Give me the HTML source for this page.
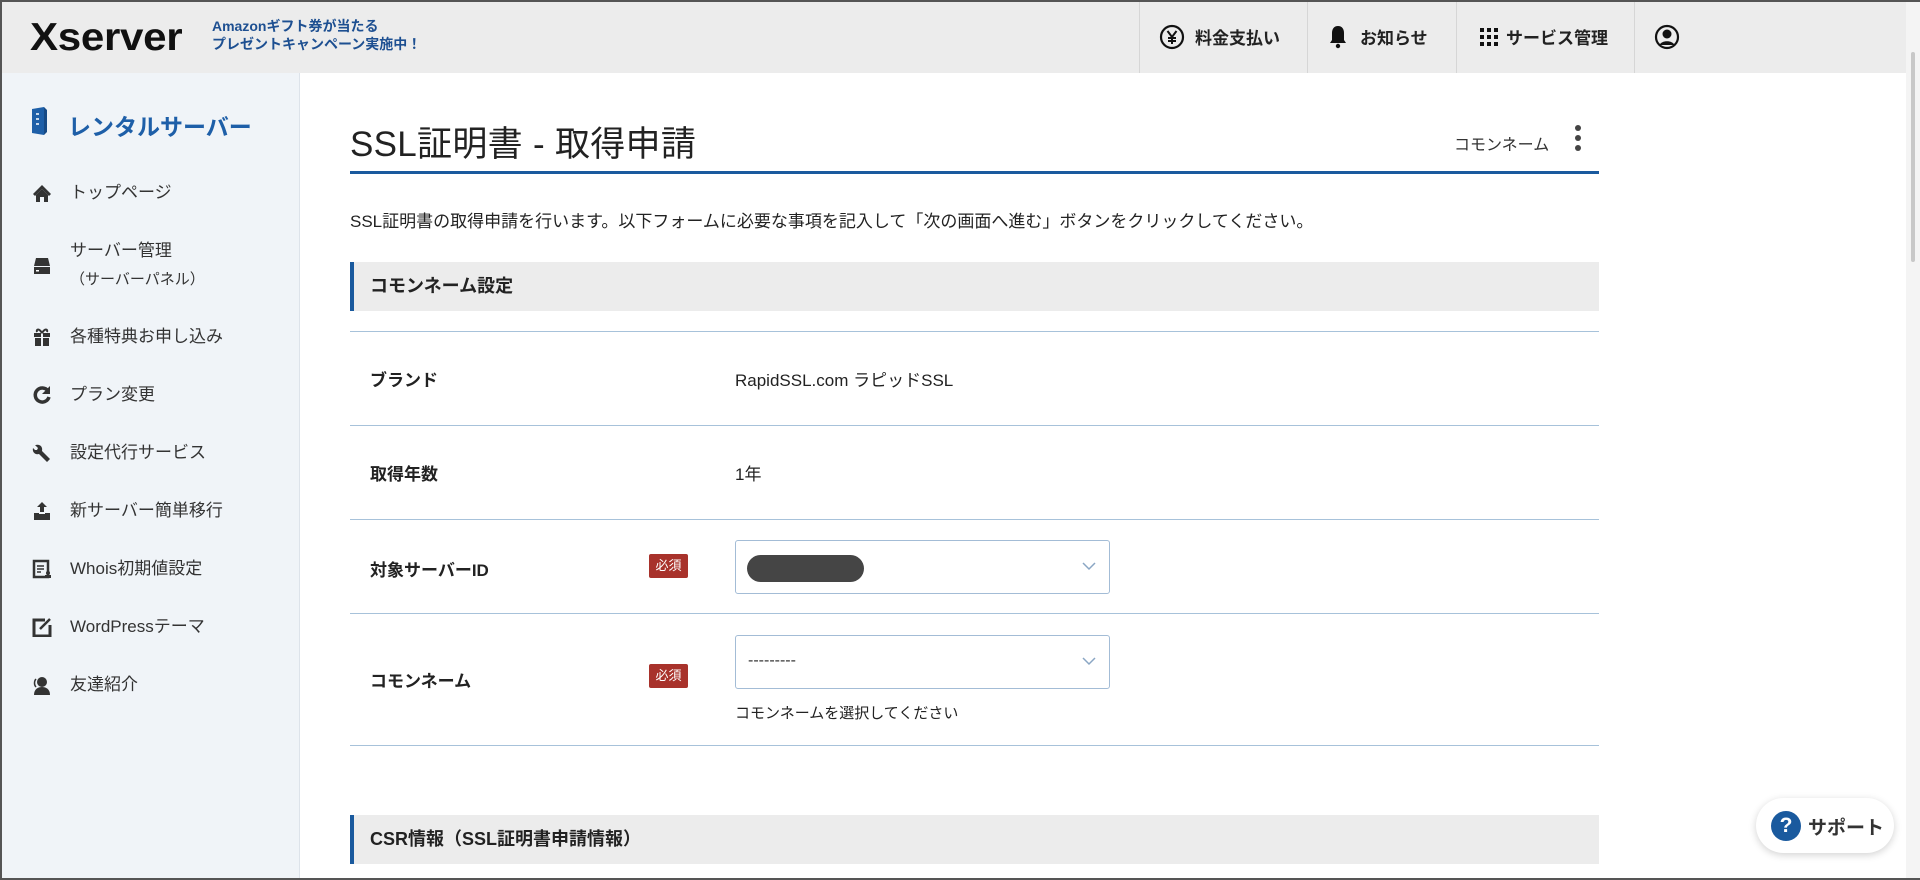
<!DOCTYPE html>
<html><head><meta charset="utf-8"><style>
*{margin:0;padding:0;box-sizing:border-box}
body{width:1920px;height:880px;overflow:hidden;position:relative;background:#fff;font-family:"Liberation Sans","Noto Sans CJK JP",sans-serif;color:#333}
.a{position:absolute}
#frame{position:absolute;left:0;top:0;width:1920px;height:880px;border:2px solid #555;border-right:none;z-index:20;pointer-events:none}
header{position:absolute;left:0;top:0;width:1906px;height:73px;background:#ececec}
.nav{position:absolute;top:0;height:73px;border-left:1px solid #d6d6d6;display:flex;align-items:center;font-weight:bold;font-size:17px;color:#222}
#side{position:absolute;left:0;top:73px;width:300px;height:807px;background:#f0f4f8;border-right:1px solid #dde3ea}
.mi{position:absolute;left:70px;font-size:17px;color:#333;line-height:20px}
.ic{position:absolute;left:32px;width:20px;height:20px}
.row{position:absolute;left:350px;width:1249px;border-top:1px solid #a7c2da}
.lbl{position:absolute;left:370px;font-size:17px;font-weight:bold;color:#222}
.val{position:absolute;left:735px;font-size:17px;color:#222}
.req{position:absolute;left:649px;width:39px;height:24px;background:#a8322b;color:#fff;font-size:13px;line-height:24px;text-align:center;border-radius:2px}
.sel{position:absolute;left:735px;width:375px;height:54px;border:1px solid #a3bcd6;border-radius:3px}
.sel svg{position:absolute;right:12px;top:20px}
.sec{position:absolute;left:350px;width:1249px;height:49px;background:#ececec;border-left:4px solid #1a5a9e;font-size:18px;font-weight:bold;color:#222;line-height:49px;padding-left:16px}
</style></head><body>
<div id="frame"></div>
<header>
 <div class="a" style="left:30px;top:16px;font-size:39px;font-weight:bold;color:#111;letter-spacing:-0.3px;transform:scaleX(1.08);transform-origin:left">Xserver</div>
 <div class="a" style="left:212px;top:17px;font-size:14px;font-weight:bold;color:#1d4f91;line-height:18px">Amazonギフト券が当たる<br>プレゼントキャンペーン実施中！</div>
 <div class="nav" style="left:1139px;width:168px;padding-left:19px"><svg width="26" height="26" viewBox="0 0 26 26" style="margin-right:10px"><circle cx="13" cy="13" r="11" fill="none" stroke="#111" stroke-width="2.2"/><path d="M8.5 7l4.5 6 4.5-6M13 13v7M9 14h8M9 17h8" fill="none" stroke="#111" stroke-width="2"/></svg>料金支払い</div>
 <div class="nav" style="left:1307px;width:149px;padding-left:20px"><svg width="20" height="26" viewBox="0 0 20 26" style="margin-right:12px"><path d="M10 2c-4 0-6 3-6 7v7l-2 3h16l-2-3V9c0-4-2-7-6-7z" fill="#111"/><circle cx="10" cy="22" r="2.2" fill="#111"/></svg>お知らせ</div>
 <div class="nav" style="left:1456px;width:178px;padding-left:23px"><svg width="18" height="18" viewBox="0 0 18 18" style="margin-right:8px" fill="#111"><rect x="0" y="0" width="4" height="4"/><rect x="7" y="0" width="4" height="4"/><rect x="14" y="0" width="4" height="4"/><rect x="0" y="7" width="4" height="4"/><rect x="7" y="7" width="4" height="4"/><rect x="14" y="7" width="4" height="4"/><rect x="0" y="14" width="4" height="4"/><rect x="7" y="14" width="4" height="4"/><rect x="14" y="14" width="4" height="4"/></svg>サービス管理</div>
 <div class="nav" style="left:1634px;width:272px;padding-left:19px"><svg width="26" height="28" viewBox="0 0 26 28"><circle cx="13" cy="14" r="11" fill="none" stroke="#111" stroke-width="2.2"/><circle cx="13" cy="11" r="4.5" fill="#111"/><path d="M5.5 22c2-5 13-5 15 0" fill="#111"/></svg></div>
</header>
<div class="a" style="left:1906px;top:0;width:14px;height:880px;background:#f4f4f4"></div>
<div class="a" style="left:1911px;top:52px;width:4px;height:210px;background:#c8c8c8;border-radius:2px"></div>
<div id="side">
 <svg class="a" style="left:29px;top:33px" width="20" height="30" viewBox="0 0 20 30"><path d="M3 3l12-2v28l-12-2z" fill="#1e5fa8"/><path d="M15 1l3 3v22l-3 3z" fill="#174a85"/><path d="M7 8h3M7 13h3M7 18h3" stroke="#fff" stroke-width="1.5"/></svg>
 <div class="a" style="left:68px;top:35px;font-size:23px;font-weight:bold;color:#1e5fa8">レンタルサーバー</div>
</div>
<svg class="ic" style="top:183px" viewBox="0 0 20 20"><path d="M10 2L1 11l2 2 7-7 7 7 2-2z" fill="#333"/><path d="M4 12l6-6 6 6v7h-4v-5H8v5H4z" fill="#333"/></svg>
<div class="mi" style="top:183px">トップページ</div>
<svg class="ic" style="top:256px" viewBox="0 0 20 20"><path d="M4 2h12l2 8H2z" fill="#333"/><rect x="2" y="11" width="16" height="7" fill="#333"/><rect x="4" y="14" width="3" height="1.5" fill="#fff"/></svg>
<div class="mi" style="top:241px">サーバー管理</div>
<div class="mi" style="top:270px;font-size:15px">（サーバーパネル）</div>
<svg class="ic" style="top:327px" viewBox="0 0 20 20"><rect x="2" y="6" width="16" height="4" fill="#333"/><rect x="3" y="11" width="14" height="8" fill="#333"/><rect x="9" y="6" width="2" height="13" fill="#f0f4f8"/><path d="M10 6C7 1 4 2 5 5M10 6c3-5 6-4 5-1" stroke="#333" stroke-width="2" fill="none"/></svg>
<div class="mi" style="top:327px">各種特典お申し込み</div>
<svg class="ic" style="top:385px" viewBox="0 0 20 20"><path d="M16 6A7 7 0 1 0 17 12" stroke="#333" stroke-width="3.5" fill="none"/><path d="M18 1v8h-8z" fill="#333"/></svg>
<div class="mi" style="top:385px">プラン変更</div>
<svg class="ic" style="top:443px" viewBox="0 0 20 20"><path d="M3 2l3 3-1 2-2 0-2-2c-1 4 2 7 6 6l8 8 3-3-8-8c1-4-2-7-6-6z" fill="#333"/></svg>
<div class="mi" style="top:443px">設定代行サービス</div>
<svg class="ic" style="top:501px" viewBox="0 0 20 20"><path d="M10 1l5 5h-3v5H8V6H5z" fill="#333"/><path d="M2 12h5v1h6v-1h5v7H2z" fill="#333"/></svg>
<div class="mi" style="top:501px">新サーバー簡単移行</div>
<svg class="ic" style="top:559px" viewBox="0 0 20 20"><rect x="2" y="2" width="14" height="16" fill="none" stroke="#333" stroke-width="2.5"/><path d="M5 7h7M5 10h7M5 13h4" stroke="#333" stroke-width="1.5"/><circle cx="16" cy="14" r="2" fill="#333"/><rect x="13" y="16" width="6" height="3" fill="#333"/></svg>
<div class="mi" style="top:559px">Whois初期値設定</div>
<svg class="ic" style="top:617px" viewBox="0 0 20 20"><path d="M13 3H2v16h16V8" fill="none" stroke="#333" stroke-width="3"/><path d="M8 12l10-10" stroke="#333" stroke-width="2.5"/></svg>
<div class="mi" style="top:617px">WordPressテーマ</div>
<svg class="ic" style="top:675px" viewBox="0 0 20 20"><circle cx="10" cy="7" r="5" fill="#333"/><path d="M2 20c0-6 4-8 8-8s8 2 8 8z" fill="#333"/><path d="M4 4c-2 2-2 6 0 8" stroke="#333" stroke-width="1.5" fill="none"/></svg>
<div class="mi" style="top:675px">友達紹介</div>

<div class="a" style="left:350px;top:116px;font-size:35px;color:#222;letter-spacing:0.3px">SSL証明書 - 取得申請</div>
<div class="a" style="left:350px;top:171px;width:1249px;height:3px;background:#1a5a9e"></div>
<div class="a" style="left:1454px;top:131px;font-size:16px;color:#333">コモンネーム</div>
<svg class="a" style="left:1574px;top:124px" width="8" height="28" viewBox="0 0 8 28"><circle cx="4" cy="4" r="3" fill="#444"/><circle cx="4" cy="14" r="3" fill="#444"/><circle cx="4" cy="24" r="3" fill="#444"/></svg>
<div class="a" style="left:350px;top:207px;font-size:17px;color:#222">SSL証明書の取得申請を行います。以下フォームに必要な事項を記入して「次の画面へ進む」ボタンをクリックしてください。</div>

<div class="sec" style="top:262px">コモンネーム設定</div>
<div class="row" style="top:331px"></div>
<div class="row" style="top:425px"></div>
<div class="row" style="top:519px"></div>
<div class="row" style="top:613px"></div>
<div class="row" style="top:745px"></div>
<div class="lbl" style="top:366px">ブランド</div>
<div class="val" style="top:366px">RapidSSL.com ラピッドSSL</div>
<div class="lbl" style="top:460px">取得年数</div>
<div class="val" style="top:460px">1年</div>
<div class="lbl" style="top:556px">対象サーバーID</div>
<div class="req" style="top:554px">必須</div>
<div class="sel" style="top:540px"><div class="a" style="left:11px;top:14px;width:117px;height:27px;background:#454545;border-radius:14px"></div><svg width="16" height="10" viewBox="0 0 16 10"><path d="M2 2l6 6 6-6" stroke="#8aa6c4" stroke-width="1.5" fill="none"/></svg></div>
<div class="lbl" style="top:667px">コモンネーム</div>
<div class="req" style="top:664px">必須</div>
<div class="sel" style="top:635px"><div class="a" style="left:12px;top:16px;font-size:16px;color:#333">---------</div><svg width="16" height="10" viewBox="0 0 16 10"><path d="M2 2l6 6 6-6" stroke="#8aa6c4" stroke-width="1.5" fill="none"/></svg></div>
<div class="a" style="left:735px;top:702px;font-size:15px;color:#222">コモンネームを選択してください</div>

<div class="sec" style="top:815px">CSR情報（SSL証明書申請情報）</div>

<div class="a" style="left:1756px;top:798px;width:138px;height:55px;background:#fff;border-radius:28px;box-shadow:0 2px 8px rgba(0,0,0,0.18)">
 <div class="a" style="left:15px;top:13px;width:30px;height:30px;border-radius:50%;background:#1a5a9e;color:#fff;font-weight:bold;font-size:21px;text-align:center;line-height:30px">?</div>
 <div class="a" style="left:52px;top:15px;font-size:19px;font-weight:bold;color:#333">サポート</div>
</div>
</body></html>
